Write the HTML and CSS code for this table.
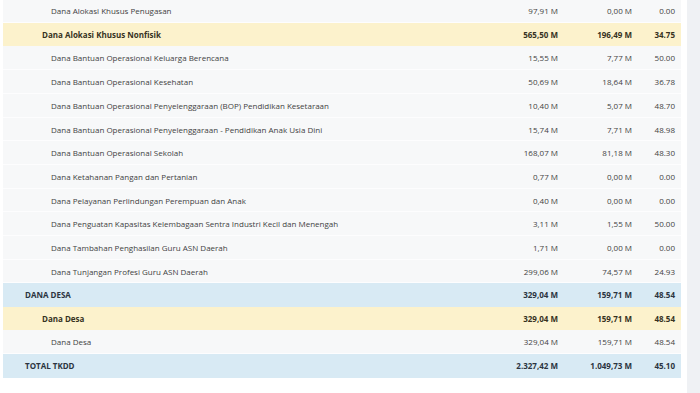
FILE: index.html
```html
<!DOCTYPE html>
<html lang="en">
<head>
    <meta charset="UTF-8">
    <title>Realisasi TKDD</title>
    <link rel="stylesheet" href="styles.css">
</head>
<body>
    <div class="page">
        <div class="table-wrap">
            <table class="tkdd-table">
                <tbody>
                    <tr class="row-item"><td class="label">Dana Alokasi Khusus Penugasan</td><td>97,91 M</td><td>0,00 M</td><td>0.00</td></tr>
                    <tr class="row-group"><td class="label">Dana Alokasi Khusus Nonfisik</td><td>565,50 M</td><td>196,49 M</td><td>34.75</td></tr>
                    <tr class="row-item"><td class="label">Dana Bantuan Operasional Keluarga Berencana</td><td>15,55 M</td><td>7,77 M</td><td>50.00</td></tr>
                    <tr class="row-item"><td class="label">Dana Bantuan Operasional Kesehatan</td><td>50,69 M</td><td>18,64 M</td><td>36.78</td></tr>
                    <tr class="row-item"><td class="label">Dana Bantuan Operasional Penyelenggaraan (BOP) Pendidikan Kesetaraan</td><td>10,40 M</td><td>5,07 M</td><td>48.70</td></tr>
                    <tr class="row-item"><td class="label">Dana Bantuan Operasional Penyelenggaraan - Pendidikan Anak Usia Dini</td><td>15,74 M</td><td>7,71 M</td><td>48.98</td></tr>
                    <tr class="row-item"><td class="label">Dana Bantuan Operasional Sekolah</td><td>168,07 M</td><td>81,18 M</td><td>48.30</td></tr>
                    <tr class="row-item"><td class="label">Dana Ketahanan Pangan dan Pertanian</td><td>0,77 M</td><td>0,00 M</td><td>0.00</td></tr>
                    <tr class="row-item"><td class="label">Dana Pelayanan Perlindungan Perempuan dan Anak</td><td>0,40 M</td><td>0,00 M</td><td>0.00</td></tr>
                    <tr class="row-item"><td class="label">Dana Penguatan Kapasitas Kelembagaan Sentra Industri Kecil dan Menengah</td><td>3,11 M</td><td>1,55 M</td><td>50.00</td></tr>
                    <tr class="row-item"><td class="label">Dana Tambahan Penghasilan Guru ASN Daerah</td><td>1,71 M</td><td>0,00 M</td><td>0.00</td></tr>
                    <tr class="row-item"><td class="label">Dana Tunjangan Profesi Guru ASN Daerah</td><td>299,06 M</td><td>74,57 M</td><td>24.93</td></tr>
                    <tr class="row-head"><td class="label">DANA DESA</td><td>329,04 M</td><td>159,71 M</td><td>48.54</td></tr>
                    <tr class="row-group"><td class="label">Dana Desa</td><td>329,04 M</td><td>159,71 M</td><td>48.54</td></tr>
                    <tr class="row-item"><td class="label">Dana Desa</td><td>329,04 M</td><td>159,71 M</td><td>48.54</td></tr>
                    <tr class="row-head"><td class="label">TOTAL TKDD</td><td>2.327,42 M</td><td>1.049,73 M</td><td>45.10</td></tr>
                </tbody>
            </table>
        </div>
        <div class="side-panel"></div>
    </div>
</body>
</html>
```

FILE: styles.css
```css
* {
    margin: 0;
    padding: 0;
    box-sizing: border-box;
}

body {
    background-color: white;
    font-family: 'Open Sans', 'Noto Sans', sans-serif;
    overflow: hidden;
}

.page {
    display: flex;
    height: 393px;
}

.table-wrap {
    width: 681px;
    padding-left: 3px;
    margin-top: -1px;
}

.side-panel {
    width: 13px;
    margin-left: 6px;
    background-color: #eff1f4;
}

.tkdd-table {
    width: 100%;
    border-collapse: collapse;
    table-layout: fixed;
    font-size: 8px;
    color: #424242;
}

.tkdd-table td {
    height: 23.67px;
    padding: 0 6px 0 0;
    text-align: right;
    white-space: nowrap;
    vertical-align: middle;
}

.tkdd-table td:nth-child(2) {
    width: 80px;
}

.tkdd-table td:nth-child(3) {
    width: 74px;
}

.tkdd-table td:nth-child(4) {
    width: 43px;
}

.tkdd-table td.label {
    text-align: left;
}

.row-item {
    background-color: #f7f8f9;
    border-bottom: 1px solid #fdfdfe;
}

.row-item td.label {
    padding-left: 48px;
}

.row-group {
    background-color: #fcf2cc;
    font-weight: 700;
    color: #37321f;
}

.row-group td.label {
    padding-left: 39px;
}

.row-head {
    background-color: #d8eaf4;
    font-weight: 700;
    color: #2b3440;
}

.row-head td.label {
    padding-left: 22px;
}
```
